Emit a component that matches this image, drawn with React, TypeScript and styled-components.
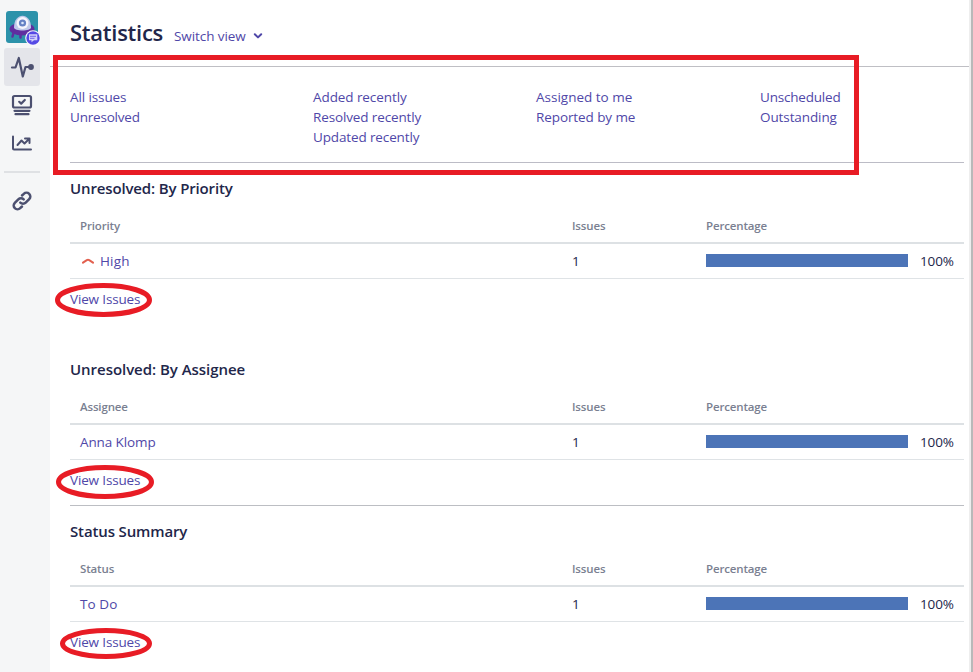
import React from "react";
import styled, { createGlobalStyle } from "styled-components";

const GlobalStyle = createGlobalStyle`
  * { box-sizing: border-box; }
  body { margin: 0; background: #fff; overflow: hidden; }
`;

const Page = styled.div`
  position: relative;
  display: flex;
  width: 973px;
  height: 672px;
  overflow: hidden;
  background: #fff;
  color: #22264a;
  font-family: "Open Sans", "Noto Sans", sans-serif;
  font-size: 13.5px;
  line-height: 20px;
`;

const Sidebar = styled.nav`
  width: 50px;
  flex: none;
  padding: 11px 0 0 4px;
  background: #f5f6f7;
`;

const Avatar = styled.div`
  height: 37px;
  padding-left: 2px;
  svg { display: block; }
`;

const NavItem = styled.div<{ $active?: boolean }>`
  display: flex;
  align-items: center;
  justify-content: center;
  width: 36px;
  height: 38px;
  border-radius: 3px;
  background: ${(p) => (p.$active ? "#e4e5ea" : "transparent")};
`;

const NavRule = styled.div`
  width: 36px;
  height: 2px;
  margin: 9px 0;
  background: #dfe1e4;
`;

const Main = styled.main`
  flex: 1;
  min-width: 0;
`;

const Header = styled.header`
  display: flex;
  height: 67px;
  padding: 17px 0 0 20px;
  border-bottom: 1px solid #bfbfc4;
`;

const Title = styled.h1`
  width: 104px;
  margin: -1px 0 0;
  font-size: 22px;
  font-weight: 600;
  line-height: 32px;
  letter-spacing: -0.25px;
`;

const Link = styled.a<{ $ls?: number }>`
  color: #4f47a8;
  text-decoration: none;
  white-space: nowrap;
  letter-spacing: ${(p) => p.$ls ?? 0}px;
`;

const Switch = styled.div`
  display: flex;
  align-items: center;
  gap: 7px;
  height: 38px;
`;

const Body = styled.div`
  width: 894px;
  margin-left: 20px;
`;

const Filters = styled.div`
  display: grid;
  grid-template-columns: 243px 223px 224px 1fr;
  height: 96px;
  padding-top: 20px;
  border-bottom: 1px solid #bcbcc6;
`;

const FilterColumn = styled.div`
  display: flex;
  flex-direction: column;
  align-items: flex-start;
`;

const Section = styled.section<{ $height: number; $ruled?: boolean }>`
  height: ${(p) => p.$height}px;
  padding-top: 13px;
  border-bottom: ${(p) => (p.$ruled ? "1px solid #bcbec3" : "none")};
`;

const SectionTitle = styled.h2<{ $ls: number }>`
  margin: 0;
  font-size: 15px;
  font-weight: 600;
  line-height: 24px;
  letter-spacing: ${(p) => p.$ls}px;
`;

const Row = styled.div`
  display: grid;
  grid-template-columns: 492px 134px 1fr;
  align-items: center;
  height: 35px;
  padding-left: 10px;
  border-bottom: 1px solid #dfe3e6;
`;

const HeadRow = styled(Row)`
  height: 44px;
  padding-top: 10px;
  border-bottom: 2px solid #dde1e4;
  color: #7a7f91;
  font-size: 11.5px;
  font-weight: 600;
  letter-spacing: -0.15px;
`;

const NameCell = styled.div`
  display: flex;
  align-items: center;
`;

const PriorityIcon = styled.svg`
  width: 12px;
  height: 6px;
  margin: 0 6px 0 2px;
`;

const Percent = styled.div`
  display: flex;
  align-items: center;
  letter-spacing: -0.15px;
`;

const Bar = styled.div`
  width: 202px;
  height: 13px;
  margin: -1px 12px 0 0;
  background: #4c74b7;
`;

const ViewLine = styled.div`
  padding-top: 10px;
`;

const WindowEdge = styled.div`
  width: 4px;
  flex: none;
  background: linear-gradient(90deg, #eeeeee 0 2px, #b9b9b9 2px 4px);
`;

const Annotations = styled.svg`
  position: absolute;
  inset: 0;
  pointer-events: none;
`;

const ink = "#4c5070";

const filters = [
  [["All issues", -0.1], ["Unresolved", -0.2]],
  [["Added recently", -0.08], ["Resolved recently", -0.13], ["Updated recently", -0.13]],
  [["Assigned to me", 0], ["Reported by me", -0.09]],
  [["Unscheduled", -0.2], ["Outstanding", -0.1]],
] as [string, number][][];

const sections = [
  { title: "Unresolved: By Priority", ls: -0.14, label: "Priority", name: "High", nameLs: 0.15, height: 181, ruled: false },
  { title: "Unresolved: By Assignee", ls: -0.04, label: "Assignee", name: "Anna Klomp", nameLs: -0.1, height: 162, ruled: true },
  { title: "Status Summary", ls: -0.14, label: "Status", name: "To Do", nameLs: 0.1, height: 166, ruled: false },
];

export default function App() {
  return (
    <Page>
      <GlobalStyle />
      <Sidebar>
        <Avatar>
          <svg width="36" height="36" viewBox="0 0 36 36">
            <rect width="32" height="32" rx="3" fill="#2c92aa" />
            <ellipse cx="16" cy="18" rx="12.500" ry="6.500" fill="#5f2fa0" />
            <path d="M7.500 22l-1 3.500M14.500 23v3.500" stroke="#5f2fa0" strokeWidth="2.500" strokeLinecap="round" />
            <path d="M8 16.500C8 .8 25 .8 25 16.500c0 4-17 4-17 0z" fill="#bfc9ea" />
            <circle cx="16.500" cy="12" r="6" fill="#f5f5fc" />
            <circle cx="16.500" cy="12" r="3.600" fill="#6582c5" />
            <circle cx="16.500" cy="12" r="1.300" fill="#dce8fa" />
            <circle cx="27" cy="27" r="7.800" fill="#f8f8fc" />
            <circle cx="27" cy="27" r="6.700" fill="#554ae5" />
            <path d="M23 23.300h8.300v6h-3.300l-2.500 2v-2H23z" fill="#d2d0fa" />
            <path d="M24 25.300h6M24 27.300h4.500" stroke="#554ae5" strokeWidth=".8" />
          </svg>
        </Avatar>
        <NavItem $active>
          <svg width="24" height="24" viewBox="0 0 24 24" fill="none" stroke={ink} strokeWidth="2.200" strokeLinejoin="round" strokeLinecap="round">
            <path d="M2 12.500h3.500L8.800 3l4 18.500 2.700-9.500H20" />
            <circle cx="21" cy="12" r="2.900" fill={ink} stroke="none" />
          </svg>
        </NavItem>
        <NavItem>
          <svg width="24" height="24" viewBox="0 0 24 24" fill="none" stroke={ink} strokeWidth="2.200" strokeLinejoin="round" strokeLinecap="round">
            <rect x="3" y="3" width="18" height="11.500" rx="1.500" />
            <path d="M9.200 8.800l2 1.800 3.600-3.600M4.500 17.800h15M5.500 21.200h13" />
          </svg>
        </NavItem>
        <NavItem>
          <svg width="24" height="24" viewBox="0 0 24 24" fill="none" stroke={ink} strokeWidth="2" strokeLinejoin="round" strokeLinecap="round">
            <path d="M3 5.500v12q0 1 1 1h17" />
            <path d="M7.500 14l4-4.500 3 3L19 8M15 7.500h4.500V12" />
          </svg>
        </NavItem>
        <NavRule />
        <NavItem>
          <svg width="24" height="24" viewBox="0 0 24 24" fill="none" stroke={ink} strokeWidth="2.500" strokeLinecap="round">
            <path d="M10.300 13.700a3.800 3.800 0 0 0 5.400 0l3.500-3.500a3.800 3.800 0 0 0-5.400-5.400L12 6.500" />
            <path d="M13.700 10.300a3.800 3.800 0 0 0-5.400 0l-3.500 3.500a3.800 3.800 0 0 0 5.400 5.400L12 17.500" />
          </svg>
        </NavItem>
      </Sidebar>
      <Main>
        <Header>
          <Title>Statistics</Title>
          <Switch>
            <Link $ls={-0.08}>Switch view</Link>
            <svg width="10" height="6" viewBox="0 0 10 6" fill="none" stroke="#4f47a8" strokeWidth="2" strokeLinecap="round" strokeLinejoin="round">
              <path d="M1.800 1.200L5 4.400l3.200-3.200" />
            </svg>
          </Switch>
        </Header>
        <Body>
          <Filters>
            {filters.map((column, i) => (
              <FilterColumn key={i}>
                {column.map(([text, ls]) => (
                  <Link key={text} $ls={ls}>{text}</Link>
                ))}
              </FilterColumn>
            ))}
          </Filters>
          {sections.map((s, i) => (
            <Section key={s.title} $height={s.height} $ruled={s.ruled}>
              <SectionTitle $ls={s.ls}>{s.title}</SectionTitle>
              <HeadRow>
                <span>{s.label}</span>
                <span>Issues</span>
                <span>Percentage</span>
              </HeadRow>
              <Row>
                <NameCell>
                  {i === 0 && (
                    <PriorityIcon viewBox="0 0 12 6" fill="none" stroke="#e2604f" strokeWidth="2" strokeLinecap="round" strokeLinejoin="round">
                      <path d="M1 4.600L4.800 2.100Q6 1.400 7.200 2.100L11 4.600" />
                    </PriorityIcon>
                  )}
                  <Link $ls={s.nameLs}>{s.name}</Link>
                </NameCell>
                <span>1</span>
                <Percent>
                  <Bar />
                  100%
                </Percent>
              </Row>
              <ViewLine>
                <Link $ls={-0.15}>View Issues</Link>
              </ViewLine>
            </Section>
          ))}
        </Body>
      </Main>
      <WindowEdge />
      <Annotations width="973" height="672" fill="none" stroke="#e81c25" strokeWidth="5">
        <rect x="55.500" y="57.500" width="801" height="115" />
        <ellipse cx="103.500" cy="300" rx="46" ry="14.500" />
        <ellipse cx="105" cy="482" rx="46.500" ry="14.500" />
        <ellipse cx="106" cy="643.500" rx="43.500" ry="13" />
      </Annotations>
    </Page>
  );
}
